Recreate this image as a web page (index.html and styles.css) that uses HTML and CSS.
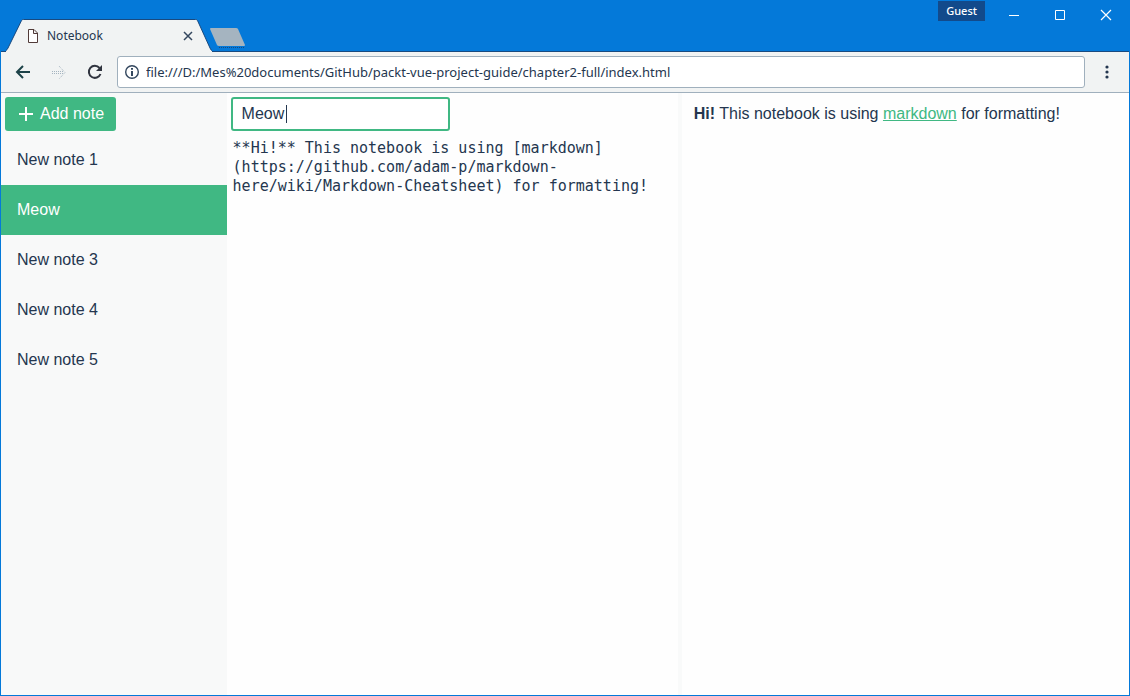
FILE: index.html
```html
<!DOCTYPE html>
<html lang="en">
<head>
<meta charset="utf-8">
<title>Notebook</title>
<link rel="stylesheet" href="styles.css">
</head>
<body>
<div class="window">
  <header class="titlebar">
    <div class="tab">
      <svg class="tab-shape" width="206" height="33" viewBox="0 0 206 33" aria-hidden="true"><path d="M0 33V31.5Q1 31 2 29L15.500 1.500Q16 .5 17.500 .5H189.500Q191 .5 191.500 1.500L204 29Q205 31.500 206 31.500V33Z" fill="#f1f3f3"/><path d="M0 31.500Q1 31 2 29L15.500 1.500Q16 .5 17.500 .5H189.500Q191 .5 191.500 1.500L204 29Q205 31.500 206 31.500" fill="none" stroke="#194a80"/></svg>
      <div class="tab-content">
        <svg width="12" height="16" viewBox="0 0 12 16" aria-hidden="true"><path d="M1.500 1.500H7L10.500 5V14.500H1.500ZM6.500 1.500V5.500H10.500" fill="#fff" stroke="#513a38"/></svg>
        <span class="tab-title">Notebook</span>
        <button class="plain" type="button" aria-label="Close tab"><svg width="10" height="10" viewBox="0 0 10 10"><path d="M1 1L9 9M9 1L1 9" fill="none" stroke="#33475e" stroke-width="1.500"/></svg></button>
      </div>
    </div>
    <button class="plain new-tab" type="button" aria-label="New tab"><svg width="37" height="21" viewBox="0 0 37 21"><path d="M2 1H27Q28.500 1 29 2L36 18Q36 19 35 19H10Q8.500 19 8 18L1 2Q1 1 2 1Z" fill="#a5b4c0"/><path d="M10 20.500H35" stroke="#194a80" stroke-dasharray="1 1" fill="none"/></svg></button>
    <div class="controls">
      <button class="guest" type="button">Guest</button>
      <button class="plain control" type="button" aria-label="Minimize"><svg width="12" height="12" viewBox="0 0 12 12"><path d="M1 6.500H11" stroke="#fff" fill="none"/></svg></button>
      <button class="plain control" type="button" aria-label="Maximize"><svg width="12" height="12" viewBox="0 0 12 12"><path d="M1.500 1.500H10.500V10.500H1.500Z" stroke="#fff" fill="none"/></svg></button>
      <button class="plain control" type="button" aria-label="Close"><svg width="12" height="12" viewBox="0 0 12 12"><path d="M1 1L11 11M11 1L1 11" stroke="#fff" stroke-width="1.200" fill="none"/></svg></button>
    </div>
  </header>
  <nav class="toolbar">
    <button class="plain" type="button" aria-label="Back"><svg width="16" height="16" viewBox="0 0 16 16"><path d="M15 8H2M8 2L2 8L8 14" fill="none" stroke="#1d4248" stroke-width="2"/></svg></button>
    <button class="plain" type="button" aria-label="Forward"><svg width="16" height="16" viewBox="0 0 16 16"><path d="M1 7.500H13M1 9.500H13M8 2L14 8.500L8 15" fill="none" stroke="#a5b4c0" stroke-dasharray="1 1"/></svg></button>
    <button class="plain" type="button" aria-label="Reload"><svg width="16" height="16" viewBox="0 0 16 16"><path d="M13.500 10A6 6 0 1 1 12.500 4" fill="none" stroke="#30343f" stroke-width="2"/><path d="M15 1V7H9Z" fill="#30343f"/></svg></button>
    <div class="address">
      <svg width="16" height="16" viewBox="0 0 16 16" aria-hidden="true"><circle cx="8" cy="8" r="6.300" fill="none" stroke="#33475e" stroke-width="1.400"/><path d="M8 4V5.700M8 7V12" stroke="#33475e" stroke-width="2"/></svg>
      <input class="url" type="text" aria-label="Address" value="file:///D:/Mes%20documents/GitHub/packt-vue-project-guide/chapter2-full/index.html">
    </div>
    <button class="plain more" type="button" aria-label="Menu"><svg width="4" height="16" viewBox="0 0 4 16"><g fill="#24364f"><circle cx="2" cy="3" r="1.600"/><circle cx="2" cy="8" r="1.600"/><circle cx="2" cy="13" r="1.600"/></g></svg></button>
  </nav>
  <div class="app">
    <aside class="sidebar">
      <div class="actions">
        <button class="add" type="button"><svg width="16" height="16" viewBox="0 0 16 16" aria-hidden="true"><path d="M8 1V15M1 8H15" stroke="#fff" stroke-width="2" fill="none"/></svg>Add note</button>
      </div>
      <button class="note" type="button">New note 1</button>
      <button class="note selected" type="button">Meow</button>
      <button class="note" type="button">New note 3</button>
      <button class="note" type="button">New note 4</button>
      <button class="note" type="button">New note 5</button>
    </aside>
    <main class="editor">
      <div class="actions">
        <div class="title-box"><input class="title" type="text" aria-label="Note title" value="Meow" size="4"><span class="caret"></span></div>
      </div>
      <textarea class="content" aria-label="Note content" spellcheck="false">**Hi!** This notebook is using [markdown](https://github.com/adam-p/markdown-here/wiki/Markdown-Cheatsheet) for formatting!</textarea>
    </main>
    <section class="preview"><p><strong>Hi!</strong> This notebook is using <a href="#">markdown</a> for formatting!</p></section>
  </div>
</div>
</body>
</html>
```
FILE: styles.css
```css
* { box-sizing: border-box; }
body { margin: 0; color: #24364f; font: 16px/20px "Liberation Sans", Arial, sans-serif; }
button, input, textarea { margin: 0; font: inherit; color: inherit; }
svg { display: block; flex: none; }
.window { display: flex; flex-direction: column; min-height: 100vh; border: 1px solid #0479d9; border-top: 0; background: #fefefe; }
.plain { display: flex; padding: 0; border: 0; background: none; }
.titlebar { display: flex; height: 52px; padding-left: 5px; background: linear-gradient(#194a80, #194a80) bottom / 100% 1px no-repeat #0479d9; }
.tab { display: grid; align-self: flex-end; width: 206px; font: 12px/16px "Noto Sans", "Open Sans", sans-serif; }
.tab-shape, .tab-content { grid-area: 1 / 1; }
.tab-content { display: flex; align-items: center; padding: 0 19px 0 21px; }
.tab-title { flex: 1; padding-left: 8px; }
.new-tab { align-self: flex-start; margin-top: 27px; margin-left: -3px; }
.controls { display: flex; align-items: flex-start; margin-left: auto; }
.guest { height: 20px; margin: 1px 6px 0 0; padding: 0 8px; border: 0; background: #124a8b; color: #fff; font: 500 11px/20px "Noto Sans", "Open Sans", sans-serif; }
.control { width: 46px; height: 30px; align-items: center; justify-content: center; }
.toolbar { display: flex; align-items: center; gap: 20px; height: 41px; padding: 0 20px 0 14px; border-bottom: 1px solid #a0b0bd; background: #f1f3f3; }
.address { display: flex; flex: 1; align-items: center; gap: 6px; min-width: 0; height: 32px; margin-left: -6px; padding: 0 6px; border: 1px solid #a0b0bd; border-radius: 3px; background: #fff; }
.url { flex: 1; min-width: 0; padding: 0; border: 0; outline: 0; background: none; font: 13px/20px "Noto Sans", "Open Sans", sans-serif; }
.app { display: flex; flex: 1; }
.sidebar { width: 20%; background: #f8f9f9; }
.actions { display: flex; padding: 4px; }
.add { display: flex; align-items: center; gap: 6px; height: 34px; padding: 0 12px 0 13px; border: 0; border-radius: 3px; background: #40b883; color: #fff; }
.note { display: block; width: 100%; height: 50px; padding: 0 16px; border: 0; background: none; text-align: left; }
.selected { background: #40b883; color: #fff; }
.editor { display: flex; flex: 1; flex-direction: column; min-width: 0; }
.title-box { display: flex; align-items: center; width: 219px; height: 34px; padding: 0 9px; border: 2px solid #40b883; border-radius: 3px; background: #fff; }
.title { width: 44px; padding: 0; border: 0; outline: 0; background: none; }
.caret { width: 1px; height: 18px; background: #24364f; }
.content { flex: 1; width: 100%; padding: 4px 6px; border: 0; outline: 0; resize: none; background: none; font: 15px/19px "DejaVu Sans Mono", monospace; }
.preview { width: 40%; padding: 11px 12px; border-left: 4px solid #f9fafa; }
.preview p { margin: 0; }
.preview a { color: #40b883; }
```
